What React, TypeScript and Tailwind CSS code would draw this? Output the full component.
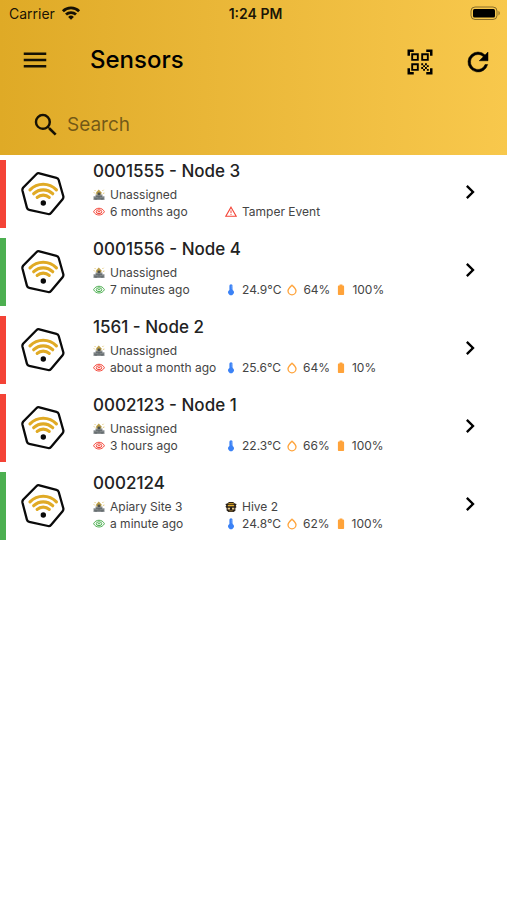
import React from "react";
import { MdChevronRight, MdMenu, MdQrCodeScanner, MdSearch } from "react-icons/md";

type Sensor = {
  name: string;
  site: string;
  hive?: string;
  seen: string;
  online: boolean;
  alert?: string;
  temperature?: string;
  humidity?: string;
  battery?: string;
};

const sensors: Sensor[] = [
  { name: "0001555 - Node 3", site: "Unassigned", seen: "6 months ago", online: false, alert: "Tamper Event" },
  { name: "0001556 - Node 4", site: "Unassigned", seen: "7 minutes ago", online: true, temperature: "24.9°C", humidity: "64%", battery: "100%" },
  { name: "1561 - Node 2", site: "Unassigned", seen: "about a month ago", online: false, temperature: "25.6°C", humidity: "64%", battery: "10%" },
  { name: "0002123 - Node 1", site: "Unassigned", seen: "3 hours ago", online: false, temperature: "22.3°C", humidity: "66%", battery: "100%" },
  { name: "0002124", site: "Apiary Site 3", hive: "Hive 2", seen: "a minute ago", online: true, temperature: "24.8°C", humidity: "62%", battery: "100%" },
];

const WifiIcon = () => (
  <svg className="w-5 h-4" viewBox="0 0 20 16" fill="none" stroke="currentColor" strokeWidth="2.8">
    <path d="M1.9 5.2a11.6 11.6 0 0 1 16.2 0" />
    <path d="M5 8.6a7.2 7.2 0 0 1 10 0" />
    <path d="M10 13.8 7.1 10.9a4.1 4.1 0 0 1 5.8 0z" fill="currentColor" stroke="none" />
  </svg>
);

const PhoneBatteryIcon = () => (
  <svg className="w-8 h-4" viewBox="0 0 32 16">
    <rect x="1" y="1" width="26" height="12.5" rx="4" fill="none" stroke="#000" strokeOpacity=".45" />
    <rect x="3" y="3" width="22" height="8.5" rx="1.5" fill="#000" />
    <path d="M28.5 5.1c1.6.6 1.6 3.8 0 4.4z" fill="#000" fillOpacity=".45" />
  </svg>
);

const RefreshIcon = () => (
  <svg className="w-[30px] h-[30px]" viewBox="0 0 24 24" fill="currentColor" stroke="currentColor" strokeWidth=".4">
    <path d="M17.65 6.35A7.96 7.96 0 0 0 12 4a8 8 0 1 0 7.73 10h-2.08A6 6 0 1 1 12 6c1.66 0 3.14.69 4.22 1.78L13 11h7V4z" />
  </svg>
);

const SensorIcon = () => (
  <svg className="w-11 h-11 shrink-0" viewBox="0 0 44 44" fill="none">
    <path
      d="M18.4 1.3 35.4 5.8q1.8.5 2.3 2.2l4.6 16.2q.4 1.7-.7 3L30 41q-1.2 1.4-2.9 1L8.2 37.8q-1.8-.4-2.3-2.2L1.5 18.8q-.4-1.7.6-3L15.4 2.2q1.3-1.3 3-.9z"
      stroke="#0a0a0a"
      strokeWidth="2.3"
    />
    <g stroke="#e0aa25" strokeWidth="3.2" strokeLinecap="round">
      <path d="M9 17.8C16.4 10.4 28 10.4 35.4 17.8" />
      <path d="M12.7 21.7c5.5-5.1 13.5-5.1 19 0" />
      <path d="M16.2 25.4c3.4-3.1 8.6-3.1 12 0" />
    </g>
    <circle cx="22.3" cy="31" r="2.7" fill="#0a0a0a" />
  </svg>
);

const SiteIcon = () => (
  <svg className="w-3 h-3 shrink-0" viewBox="0 0 12 12">
    <path d="M.5 11V7.2h2V5.5h7v1.7h2V11z" fill="#8a8f92" />
    <path d="M3.2 5.5V3.2L5.8.6l2.6 2.6v2.3z" fill="#bda04a" />
    <path d="M4.6 3.6h2.8v2.6H4.6z" fill="#4d514e" />
    <path d="M1 9.2h10M3 7.4h6M3 11V9.3M6 9V7.5M9 11V9.3" stroke="#555b5e" strokeWidth=".7" />
    <path d="M.8 3.3 2 4.5M1.6 1l1 1.1M10.6.8 9.4 2M11.4 4l-1.5.5" stroke="#dfc266" strokeWidth=".9" />
  </svg>
);

const HiveIcon = () => (
  <svg className="w-3 h-3 shrink-0" viewBox="0 0 12 12">
    <path d="M2.2 2.5 4 .9h4.2l1.6 1.5 1.8.6-.9 1.9.9 1.2-1.2.8v2.8L8.5 11h-5L1.6 9.5V7L.4 5.8l.9-1.1L.4 3z" fill="#292017" />
    <path d="M3.4 2.7h5.3M2.8 4.6h6.4" stroke="#e8b02d" strokeWidth="1.1" />
    <path d="M2.7 6.8h2.3v1.8H2.7zM7 6.8h2.3v1.8H7z" fill="#eccb8c" />
    <path d="M4.2 9.9h3.6" stroke="#af8a40" strokeWidth=".8" />
  </svg>
);

const EyeIcon = ({ online }: { online: boolean }) => (
  <svg className={`w-3 h-3 shrink-0 ${online ? "text-[#4caf50]" : "text-[#f44336]"}`} viewBox="0 0 12 12" fill="none" stroke="currentColor" strokeWidth="1">
    <path d="M.6 5.7C2.8 1.1 9.2 1.1 11.4 5.7 9.2 10.1 2.8 10.1.6 5.7z" />
    <ellipse cx="6" cy="5.7" rx="2.8" ry="1.9" />
    <path d="M4.8 5.7h2.4" />
  </svg>
);

const AlertIcon = () => (
  <svg className="w-3 h-3 shrink-0" viewBox="0 0 12 12" fill="none" stroke="#f44336">
    <path d="M6 1.2 11.2 10.2H.8z" strokeWidth="1.1" />
    <path d="M6 4.4v2.6M6 7.8v1.1" strokeWidth="1" />
  </svg>
);

const ThermometerIcon = () => (
  <svg className="w-3 h-3 shrink-0" viewBox="0 0 12 12" fill="#3b82f6">
    <path d="M4.4 1.8a1.6 1.6 0 0 1 3.2 0V6a2.8 2.8 0 1 1-3.2 0z" />
    <path d="M6.6 2.2h1M6.6 4h1" stroke="#fff" strokeWidth=".6" />
  </svg>
);

const DropIcon = () => (
  <svg className="w-3 h-3 shrink-0" viewBox="0 0 12 12" fill="none" stroke="#ffa33a" strokeWidth="1.3">
    <path d="M6 1.1C4.3 2.9 2 4.8 2 6.8a4 4 0 0 0 8 0C10 4.8 7.7 2.9 6 1.1z" />
  </svg>
);

const BatteryIcon = () => (
  <svg className="w-3 h-3 shrink-0" viewBox="0 0 12 12" fill="#ffa33a">
    <path d="M4.6.6h2.8v1h.9q.8 0 .8.8v7.9q0 .8-.8.8H3.7q-.8 0-.8-.8V2.4q0-.8.8-.8h.9z" />
  </svg>
);

const Reading = ({ icon, children }: { icon: React.ReactNode; children: React.ReactNode }) => (
  <span className="flex items-center gap-[5px] whitespace-nowrap">
    {icon}
    {children}
  </span>
);

const SensorRow = ({ sensor }: { sensor: Sensor }) => (
  <li>
    <a href="#" className={`flex items-center h-[68px] border-l-6 pl-[15px] pr-[23px] ${sensor.online ? "border-[#4caf50]" : "border-[#f44336]"}`}>
      <SensorIcon />
      <div className="flex-1 ml-7 self-start">
        <h2 className="text-[17px] leading-[22px] font-medium text-[#222]">{sensor.name}</h2>
        {/* Location, then last seen and readings */}
        <div className="mt-1 grid grid-cols-[132px_1fr] text-[12px] leading-[17px] text-[#444]">
          <Reading icon={<SiteIcon />}>{sensor.site}</Reading>
          <div>{sensor.hive && <Reading icon={<HiveIcon />}>{sensor.hive}</Reading>}</div>
          <Reading icon={<EyeIcon online={sensor.online} />}>{sensor.seen}</Reading>
          <div className="flex gap-[5px]">
            {sensor.alert && <Reading icon={<AlertIcon />}>{sensor.alert}</Reading>}
            {sensor.temperature && <Reading icon={<ThermometerIcon />}>{sensor.temperature}</Reading>}
            {sensor.humidity && <Reading icon={<DropIcon />}>{sensor.humidity}</Reading>}
            {sensor.battery && <Reading icon={<BatteryIcon />}>{sensor.battery}</Reading>}
          </div>
        </div>
      </div>
      <MdChevronRight className="w-7 h-7 mb-1 shrink-0 text-black" />
    </a>
  </li>
);

const App = () => {
  return (
    <div className="min-h-screen bg-white font-[Inter,sans-serif]">
      <header className="bg-linear-to-r from-[#dfaa26] to-[#f8c84c] text-black/90">
        {/* Status bar */}
        <div className="grid grid-cols-[1fr_auto_1fr] items-center h-7 pl-[9px] pr-[5px] text-[14px] leading-5">
          <div className="flex items-center gap-[6px]">
            Carrier
            <WifiIcon />
          </div>
          <div className="font-semibold">1:24 PM</div>
          <div className="flex justify-end">
            <PhoneBatteryIcon />
          </div>
        </div>

        {/* Toolbar */}
        <div className="flex items-center h-16 pl-5 pr-[14px]">
          <button aria-label="Menu">
            <MdMenu className="w-[30px] h-[30px]" />
          </button>
          <h1 className="flex-1 ml-10 text-[24px] font-medium text-black">Sensors</h1>
          <button aria-label="Scan code" className="pt-1 text-black">
            <MdQrCodeScanner className="w-[30px] h-[30px]" />
          </button>
          <button aria-label="Refresh" className="ml-7 pt-1 text-black">
            <RefreshIcon />
          </button>
        </div>

        {/* Search */}
        <label className="flex items-center h-[63px] pt-[3px] pl-[31px] pr-8 gap-[6px]">
          <MdSearch className="w-[30px] h-[30px] shrink-0" />
          <input
            type="search"
            aria-label="Search"
            placeholder="Search"
            className="flex-1 min-w-0 bg-transparent text-[19px] outline-none placeholder:text-black/50"
          />
        </label>
      </header>

      <main>
        <ul className="flex flex-col gap-[10px] pt-[5px]">
          {sensors.map((sensor) => (
            <SensorRow key={sensor.name} sensor={sensor} />
          ))}
        </ul>
      </main>
    </div>
  );
};

export default App;
